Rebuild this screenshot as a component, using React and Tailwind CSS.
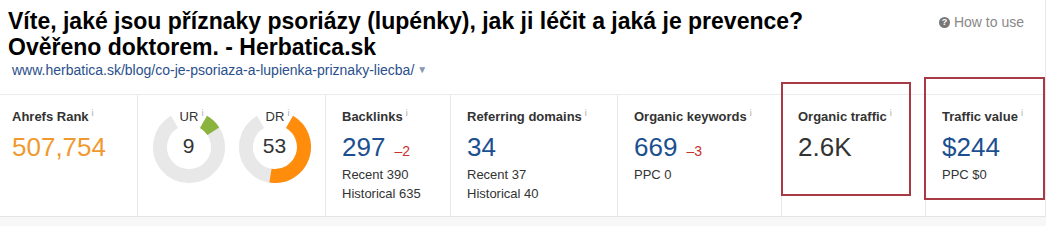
import React from 'react';

const font = "font-['Liberation_Sans',Arial,sans-serif]";

function I() {
  return <span className="relative -top-[5px] ml-[3px] text-[9px] font-normal text-[#aaa]">i</span>;
}

function arc(cx, cy, r, a0, a1) {
  const p = (a) => {
    const t = (a * Math.PI) / 180;
    return `${(cx + r * Math.sin(t)).toFixed(2)} ${(cy - r * Math.cos(t)).toFixed(2)}`;
  };
  const large = a1 - a0 > 180 ? 1 : 0;
  return `M ${p(a0)} A ${r} ${r} 0 ${large} 1 ${p(a1)}`;
}

function Donut({ label, value, color }) {
  return (
    <div className="relative w-[72px] h-[72px] mt-[16px]">
      <svg width="72" height="72" viewBox="0 0 72 72" className="absolute inset-0">
        <path d={arc(36, 36, 29, 30, 330)} fill="none" stroke="#e8e8e8" strokeWidth="14" />
        <path d={arc(36, 36, 29, 30, 30 + value * 3)} fill="none" stroke={color} strokeWidth="14" />
      </svg>
      <div className="absolute -top-[2px] left-0 right-0 flex justify-center text-[13px] leading-[16px] text-[#333]">
        <span className="pl-[6px]">{label}<I /></span>
      </div>
      <div className="absolute inset-0 flex items-center justify-center pb-[3px] text-[21px] text-[#333]">
        {value}
      </div>
    </div>
  );
}

function Stat({ w, title, value, valueClass = 'text-[#1c4f8f]', delta, lines = [], last }) {
  return (
    <div className={`${w} shrink-0 pl-[16px] pt-[14px] ${last ? '' : 'border-r border-[#e8e8e8]'}`}>
      <div className="text-[13px] leading-[16px] font-bold text-[#333] whitespace-nowrap">
        {title}<I />
      </div>
      <div className="mt-[6px] flex items-baseline h-[30px] leading-[30px]">
        <span className={`text-[26px] ${valueClass}`}>{value}</span>
        {delta && <span className="ml-[9px] text-[14px] text-[#c9302c]">{delta}</span>}
      </div>
      <div className="mt-[3px] text-[13px] leading-[19px] text-[#333]">
        {lines.map((l) => <div key={l}>{l}</div>)}
      </div>
    </div>
  );
}

export default function App() {
  return (
    <div className={`relative w-[1053px] h-[226px] bg-white overflow-hidden ${font}`}>
      <div className="w-[1046px] border-r border-[#e8e8e8]">
        <div className="flex justify-between pl-[8px] pt-[8px] h-[94px]">
          <div>
            <h1 className="text-[23px] leading-[26px] font-bold text-black">
              Víte, jaké jsou příznaky psoriázy (lupénky), jak ji léčit a jaká je prevence?
              <br />
              Ověřeno doktorem. - Herbatica.sk
            </h1>
            <div className="mt-[2px] pl-[4px] text-[14px] leading-[16px] text-[#2a4f8c] flex items-center">
              www.herbatica.sk/blog/co-je-psoriaza-a-lupienka-priznaky-liecba/
              <span className="ml-[3px] text-[10px] text-[#8796b0]">▼</span>
            </div>
          </div>
          <div className="flex items-start pr-[21px] pt-[6px]">
            <div className="flex items-center gap-[4px] text-[14px] leading-[16px] text-[#888]">
              <span className="w-[11px] h-[11px] rounded-full bg-[#777] text-white text-[9px] leading-[11px] font-bold flex items-center justify-center">?</span>
              How to use
            </div>
          </div>
        </div>
        <div className="flex h-[122px] border-t border-[#ebebeb]">
          <div className="w-[138px] shrink-0 pl-[12px] pt-[14px] border-r border-[#e8e8e8]">
            <div className="text-[13px] leading-[16px] font-bold text-[#333] whitespace-nowrap">
              Ahrefs Rank<I />
            </div>
            <div className="mt-[6px] h-[30px] leading-[30px] text-[26px] text-[#f0992f]">507,754</div>
          </div>
          <div className="w-[188px] shrink-0 flex justify-center gap-[14px] border-r border-[#e8e8e8]">
            <Donut label="UR" value={9} color="#8ab43e" />
            <Donut label="DR" value={53} color="#ff8c0a" />
          </div>
          <Stat w="w-[125px]" title="Backlinks" value="297" delta="–2" lines={['Recent 390', 'Historical 635']} />
          <Stat w="w-[167px]" title="Referring domains" value="34" lines={['Recent 37', 'Historical 40']} />
          <Stat w="w-[164px]" title="Organic keywords" value="669" delta="–3" lines={['PPC 0']} />
          <Stat w="w-[144px]" title="Organic traffic" value="2.6K" valueClass="text-[#333]" />
          <Stat w="w-[119px]" title="Traffic value" value="$244" lines={['PPC $0']} last />
        </div>
      </div>
      <div className="w-[1046px] h-[10px] bg-[#f7f7f7] border-t border-[#e4e4e4]" />

      <div className="absolute left-[781px] top-[82px] w-[130px] h-[114px] border-2 border-[#a83a45]" />
      <div className="absolute left-[924px] top-[77px] w-[121px] h-[123px] border-2 border-[#a83a45]" />
    </div>
  );
}
